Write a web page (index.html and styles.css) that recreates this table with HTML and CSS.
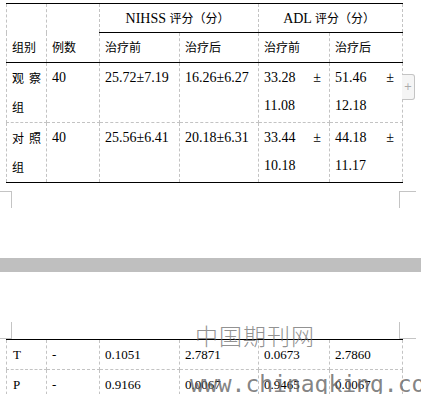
FILE: index.html
```html
<!DOCTYPE html>
<html lang="zh">
<head>
<meta charset="utf-8">
<link rel="stylesheet" href="styles.css">
</head>
<body>
<div class="page1">
  <table class="grid t1">
    <colgroup><col class="c1"><col class="c2"><col class="c3"><col class="c4"><col class="c5"><col class="c6"></colgroup>
    <tr class="h1">
      <td rowspan="2" class="hb"><span class="zh">组别</span></td>
      <td rowspan="2" class="hb"><span class="zh">例数</span></td>
      <td colspan="2" class="hc">NIHSS <span class="zh">评分（分）</span></td>
      <td colspan="2" class="hc">ADL <span class="zh">评分（分）</span></td>
    </tr>
    <tr class="h2">
      <td><span class="zh">治疗前</span></td>
      <td><span class="zh">治疗后</span></td>
      <td><span class="zh">治疗前</span></td>
      <td><span class="zh">治疗后</span></td>
    </tr>
    <tr class="b">
      <td class="jz"><span class="zh">观察组</span></td>
      <td>40</td>
      <td>25.72±7.19</td>
      <td>16.26±6.27</td>
      <td class="j">33.28 ± 11.08</td>
      <td class="j">51.46 ± 12.18</td>
    </tr>
    <tr class="b last">
      <td class="jz"><span class="zh">对照组</span></td>
      <td>40</td>
      <td>25.56±6.41</td>
      <td>20.18±6.31</td>
      <td class="j">33.44 ± 10.18</td>
      <td class="j">44.18 ± 11.17</td>
    </tr>
  </table>
  <div class="addcol">+</div>
</div>
<div class="marks marks-end">
  <div class="mk mk-l"></div>
  <div class="mk mk-r"></div>
</div>
<div class="bar"></div>
<div class="marks marks-start">
  <div class="mk mk-l"></div>
  <div class="mk mk-r"></div>
</div>
<div class="page2">
  <table class="grid t2">
    <colgroup><col class="c1"><col class="c2"><col class="c3"><col class="c4"><col class="c5"><col class="c6"></colgroup>
    <tr>
      <td class="lbl">T</td><td class="dash">-</td><td>0.1051</td><td>2.7871</td><td>0.0673</td><td>2.7860</td>
    </tr>
    <tr>
      <td class="lbl">P</td><td class="dash">-</td><td>0.9166</td><td>0.0067</td><td>0.9465</td><td>0.0067</td>
    </tr>
  </table>
  <div class="wm wm-cn">中国期刊网</div>
  <div class="wm wm-url">www.chinaqking.com</div>
</div>
</body>
</html>
```
FILE: styles.css
```css
html, body {
  margin: 0;
  padding: 0;
  overflow: hidden;
  background: #fff;
}
body {
  width: 421px;
  height: 394px;
  padding-top: 3px;
  box-sizing: border-box;
  font-family: "Liberation Serif", "Noto Sans CJK SC", serif;
  font-size: 14px;
  color: #000;
}
.zh {
  font-family: "Noto Sans CJK SC", sans-serif;
  font-size: 12px;
}
.page1, .page2 {
  position: relative;
}
.grid {
  margin-left: 6px;
  border-collapse: collapse;
  table-layout: fixed;
  width: 396px;
}
.c1 { width: 40px; }
.c2 { width: 53px; }
.c3 { width: 80px; }
.c4 { width: 79px; }
.c5 { width: 71px; }
.c6 { width: 73px; }
.grid td {
  border: 1px dashed #c3c3c3;
  padding: 0 8px 0 5px;
  line-height: 28px;
  vertical-align: top;
  text-align: left;
}
.t1 {
  border-top: 1px solid #000;
}
.t1 .h1 td {
  height: 28px;
  border-top: 1px solid #000;
}
.t1 .h1 td.hc {
  text-align: center;
  vertical-align: middle;
  border-bottom: 1px solid #000;
  line-height: 26px;
}
.t1 .h1 td.hb {
  vertical-align: bottom;
  border-bottom: 1px solid #000;
}
.t1 .h2 td {
  height: 29px;
  vertical-align: middle;
  border-bottom: 1px solid #000;
}
.t1 .b td {
  padding-top: 1px;
}
.t1 .last td {
  border-bottom: 1px solid #000;
}
.grid td.j {
  text-align: justify;
}
.grid td.jz {
  text-align: justify;
  padding-right: 5px;
}
.addcol {
  position: absolute;
  left: 402px;
  top: 71px;
  width: 12px;
  height: 24px;
  border: 1px solid #c4c4c4;
  border-left: none;
  border-radius: 0 3px 3px 0;
  background: #f5f5f5;
  color: #aaa;
  font-family: "DejaVu Sans", sans-serif;
  font-size: 10px;
  line-height: 24px;
  text-align: center;
}
.marks {
  width: 416px;
  display: flex;
  justify-content: space-between;
}
.mk {
  height: 16px;
  border-color: #c4c4c4;
  border-style: solid;
  border-width: 0;
}
.mk-l { width: 11px; border-right-width: 1px; }
.mk-r { width: 16px; border-left-width: 1px; }
.marks-end { margin-top: 8px; }
.marks-end .mk { border-top-width: 1px; }
.marks-start { margin-top: 50px; }
.marks-start .mk { border-bottom-width: 1px; }
.bar {
  margin-top: 50px;
  height: 14px;
  background: #bfbfbf;
}
.t2 {
  border-top: 1px solid #000;
  font-size: 13px;
}
.t2 td {
  line-height: 29px;
}
.grid td.lbl {
  font-size: 13px;
  padding-left: 6px;
}
.wm {
  position: absolute;
  white-space: nowrap;
  pointer-events: none;
}
.wm-cn {
  left: 195px;
  top: -16px;
  font-family: "Noto Sans CJK SC", sans-serif;
  font-size: 23px;
  letter-spacing: 1px;
  line-height: 24px;
  color: rgba(110, 110, 110, 0.75);
  font-weight: 300;
}
.wm-url {
  left: 190px;
  top: 34px;
  font-family: "DejaVu Sans Mono", monospace;
  font-size: 23px;
  line-height: 23px;
  color: rgba(100, 100, 100, 0.8);
}
```
